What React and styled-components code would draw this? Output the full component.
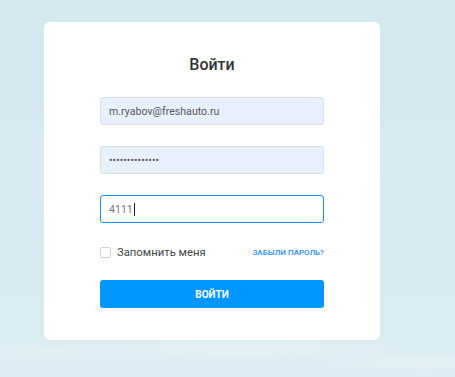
import React from 'react';
import styled, { createGlobalStyle } from 'styled-components';

const GlobalStyle = createGlobalStyle`
  html, body {
    margin: 0;
    padding: 0;
  }
  body {
    font-family: Roboto, "Noto Sans", Arial, sans-serif;
  }
`;

const Page = styled.div`
  min-height: 377px;
  box-sizing: border-box;
  padding: 22px 0 0 44px;
  background:
    radial-gradient(ellipse 170px 12px at 240px 350px, rgba(235, 245, 248, 0.6), transparent),
    radial-gradient(ellipse 110px 10px at 420px 362px, rgba(235, 245, 248, 0.5), transparent),
    radial-gradient(ellipse 80px 10px at 50px 352px, rgba(235, 245, 248, 0.4), transparent),
    linear-gradient(180deg, #d4e8ef 0%, #d7eaf1 60%, #dbedf3 100%);
`;

const Card = styled.div`
  width: 336px;
  box-sizing: border-box;
  padding: 33px 56px 32px;
  background: #fff;
  border-radius: 6px;
  display: flex;
  flex-direction: column;
`;

const Title = styled.h1`
  margin: 0 0 23px;
  font-size: 16px;
  line-height: 19px;
  font-weight: 500;
  color: #333;
  text-align: center;
`;

const Fields = styled.div`
  display: flex;
  flex-direction: column;
  gap: 21px;
`;

const Input = styled.input`
  box-sizing: border-box;
  width: 100%;
  height: 28px;
  padding: 0 8px;
  border: 1px solid #dcdfe3;
  border-radius: 3px;
  background: #e8f0fe;
  font-family: Roboto, Arial, sans-serif;
  font-size: 10.6px;
  color: #555;
  outline: none;
`;

const FakeInput = styled.div`
  box-sizing: border-box;
  height: 28px;
  padding: 0 8px;
  display: flex;
  align-items: center;
  border: 1px solid #1a90ff;
  border-radius: 3px;
  background: #fff;
  font-size: 10.6px;
  color: #777;
`;

const Caret = styled.span`
  display: inline-block;
  width: 1px;
  height: 13px;
  margin-left: 1px;
  background: #222;
`;

const OptionsRow = styled.div`
  margin-top: 22px;
  height: 14px;
  display: flex;
  align-items: center;
  justify-content: space-between;
`;

const Remember = styled.label`
  display: flex;
  align-items: center;
  gap: 6px;
  font-size: 11.3px;
  color: #444;
`;

const Box = styled.span`
  box-sizing: border-box;
  width: 11px;
  height: 11px;
  border: 1px solid #d0d0d0;
  border-radius: 2px;
  background: #fff;
`;

const Forgot = styled.a`
  font-size: 8px;
  font-weight: 500;
  color: #1a8cff;
  text-decoration: none;
  text-transform: uppercase;
`;

const SubmitButton = styled.button`
  margin-top: 21px;
  height: 28px;
  border: none;
  border-radius: 3px;
  background: #0096ff;
  color: #fff;
  font-family: Roboto, Arial, sans-serif;
  font-size: 10px;
  font-weight: 700;
  text-transform: uppercase;
  cursor: pointer;
`;

const App = () => (
  <>
    <GlobalStyle />
    <Page>
      <Card>
        <Title>Войти</Title>
        <Fields>
          <Input type="text" value="m.ryabov@freshauto.ru" readOnly />
          <Input type="password" value="qwertyuiopasdf" readOnly />
          <FakeInput>
            4111
            <Caret />
          </FakeInput>
        </Fields>
        <OptionsRow>
          <Remember>
            <Box />
            Запомнить меня
          </Remember>
          <Forgot href="#">Забыли пароль?</Forgot>
        </OptionsRow>
        <SubmitButton type="button">Войти</SubmitButton>
      </Card>
    </Page>
  </>
);

export default App;
